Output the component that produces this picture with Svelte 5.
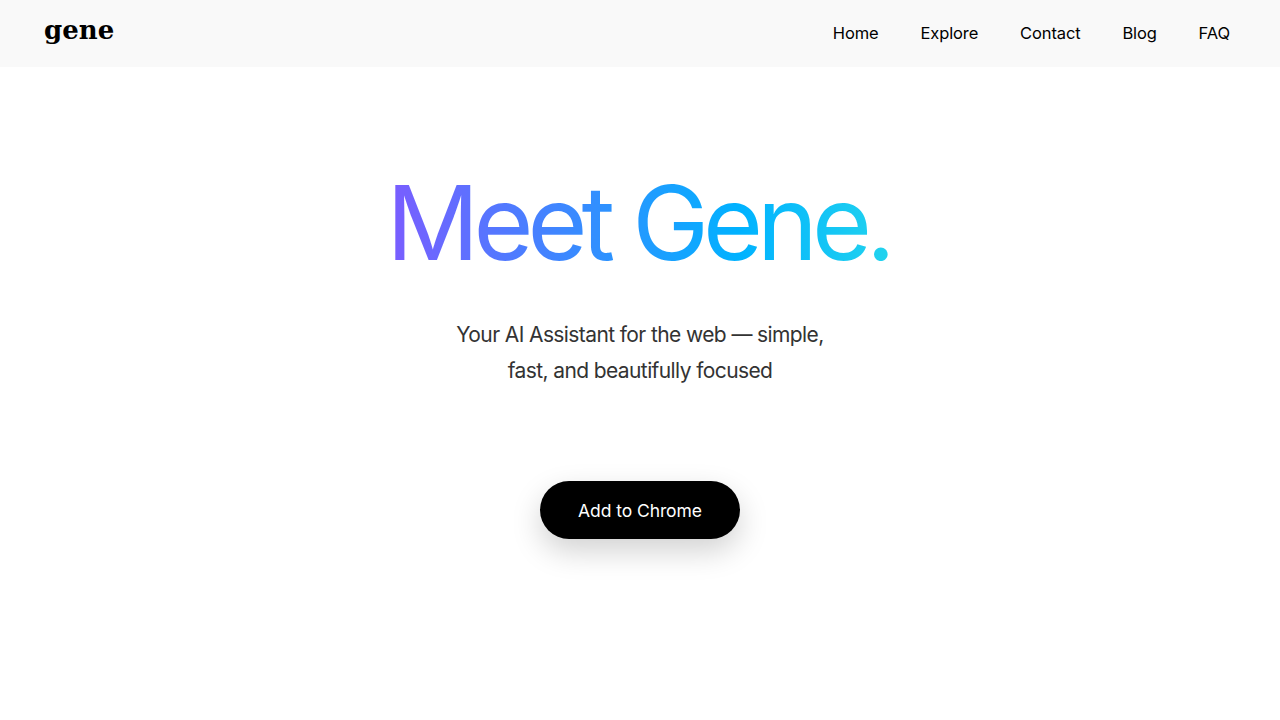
<script>
  const links = ['Home', 'Explore', 'Contact', 'Blog', 'FAQ'];
</script>

<div class="page">
  <header class="nav">
    <div class="logo">gene</div>
    <nav class="links">
      {#each links as l}
        <a href="#top">{l}</a>
      {/each}
    </nav>
  </header>
  <main class="hero">
    <h1>Meet Gene.</h1>
    <p>Your AI Assistant for the web — simple,<br />fast, and beautifully focused</p>
    <button>Add to Chrome</button>
  </main>
</div>

<style>
  :global(body) { margin: 0; background: #fff; }
  .page { font-family: Inter, "Liberation Sans", sans-serif; height: 720px; overflow: hidden; }
  .nav { height: 67px; box-sizing: border-box; background: #f9f9f9; display: flex; justify-content: space-between; padding: 0 50px 0 44px; }
  .logo { font-family: "DejaVu Serif", serif; font-weight: 700; font-size: 26px; line-height: 30px; padding-top: 15px; color: #000; }
  .links { display: flex; gap: 41.8px; align-items: center; padding-bottom: 1px; }
  .links a { color: #000; text-decoration: none; font-size: 16.5px; letter-spacing: -0.1px; }
  .hero { display: flex; flex-direction: column; align-items: center; }
  h1 { margin: 94px 4px 0 0; font-size: 103px; font-weight: 400; line-height: 124px; letter-spacing: -6px; background: linear-gradient(90deg, #7b5cff, #00b2ff 70%, #22d3ee); -webkit-background-clip: text; background-clip: text; color: transparent; }
  p { margin: 32px 0 0; font-size: 21px; font-weight: 400; line-height: 36px; letter-spacing: -0.6px; color: #333; text-align: center; }
  button { margin-top: 92px; width: 200px; height: 58px; border: 0; border-radius: 29px; background: #000; color: #fff; font: 400 17.5px Inter, sans-serif; letter-spacing: -0.08px; box-shadow: 0 12px 30px rgba(0,0,0,.18); }
</style>
